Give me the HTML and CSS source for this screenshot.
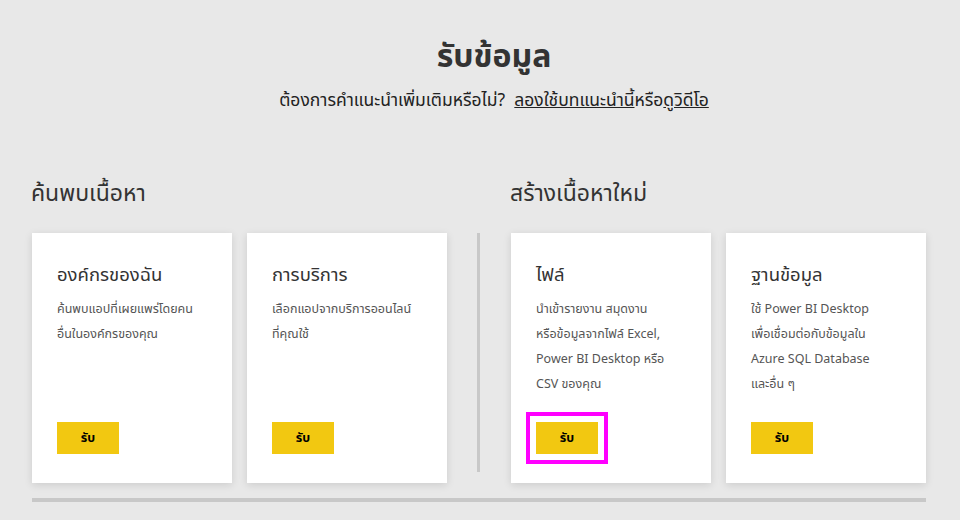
FILE: index.html
```html
<!DOCTYPE html>
<html lang="th">
<head>
<meta charset="utf-8">
<link rel="stylesheet" href="styles.css">
</head>
<body>
<div class="page">
  <header class="header">
    <h1 class="title">รับข้อมูล</h1>
    <p class="subtitle">ต้องการคำแนะนำเพิ่มเติมหรือไม่?&nbsp; <a href="#" class="link">ลองใช้บทแนะนำนี้</a>หรือ<a href="#" class="link">ดูวิดีโอ</a></p>
  </header>
  <div class="sections">
    <section class="section">
      <h2 class="section-title">ค้นพบเนื้อหา</h2>
      <div class="cards">
        <div class="card">
          <h3 class="card-title">องค์กรของฉัน</h3>
          <p class="card-desc">ค้นพบแอปที่เผยแพร่โดยคน<br>อื่นในองค์กรของคุณ</p>
          <div class="btn-wrap"><button class="btn">รับ</button></div>
        </div>
        <div class="card">
          <h3 class="card-title">การบริการ</h3>
          <p class="card-desc">เลือกแอปจากบริการออนไลน์<br>ที่คุณใช้</p>
          <div class="btn-wrap"><button class="btn">รับ</button></div>
        </div>
      </div>
    </section>
    <div class="divider"></div>
    <section class="section">
      <h2 class="section-title">สร้างเนื้อหาใหม่</h2>
      <div class="cards">
        <div class="card">
          <h3 class="card-title">ไฟล์</h3>
          <p class="card-desc">นำเข้ารายงาน สมุดงาน<br>หรือข้อมูลจากไฟล์ Excel,<br>Power BI Desktop หรือ<br>CSV ของคุณ</p>
          <div class="btn-wrap"><button class="btn btn-highlight">รับ</button></div>
        </div>
        <div class="card">
          <h3 class="card-title">ฐานข้อมูล</h3>
          <p class="card-desc">ใช้ Power BI Desktop<br>เพื่อเชื่อมต่อกับข้อมูลใน<br>Azure SQL Database<br>และอื่น ๆ</p>
          <div class="btn-wrap"><button class="btn">รับ</button></div>
        </div>
      </div>
    </section>
  </div>
  <div class="bottom-bar"></div>
</div>
</body>
</html>
```
FILE: styles.css
```css
* { box-sizing: border-box; }
html, body { margin: 0; padding: 0; }
body {
  background: #e8e8e8;
  font-family: "Segoe UI", "Noto Sans", "Noto Sans Thai", "DejaVu Sans", sans-serif;
  color: #333;
  width: 960px;
  height: 520px;
  overflow: hidden;
}
.page {
  padding: 0 34px 0 32px;
}
.header {
  text-align: center;
  padding-left: 30px;
  padding-top: 33px;
}
.title {
  margin: 0;
  font-size: 32px;
  font-weight: 700;
  line-height: 44px;
  color: #333;
}
.subtitle {
  margin: 10px 0 0;
  font-size: 17.5px;
  line-height: 24px;
  color: #222;
}
.link {
  color: #222;
  text-decoration: underline;
}
.sections {
  display: flex;
  margin-top: 66px;
}
.section-title {
  margin: 0 0 0 -1px;
  font-size: 23px;
  font-weight: 400;
  line-height: 30px;
  color: #333;
}
.cards {
  display: flex;
  gap: 15px;
  margin-top: 26px;
}
.divider {
  width: 3px;
  background: #c8c8c8;
  margin: 56px 31px 11px 30px;
}
.card {
  width: 200px;
  height: 250px;
  background: #fff;
  box-shadow: 0 2px 8px rgba(0, 0, 0, 0.12);
  padding: 28px 25px 29px;
  display: flex;
  flex-direction: column;
}
.card-title {
  margin: 0;
  font-size: 18.5px;
  font-weight: 400;
  line-height: 26px;
  color: #333;
}
.card-desc {
  margin: 9px 0 0;
  font-size: 12.5px;
  line-height: 25px;
  color: #555;
}
.btn-wrap {
  margin-top: auto;
}
.btn {
  width: 62px;
  height: 32px;
  border: none;
  background: #f2c811;
  color: #000;
  font-family: inherit;
  font-size: 12.5px;
  font-weight: 700;
  padding: 0;
  display: block;
}
.btn-highlight {
  outline: 4px solid #ff00ff;
  outline-offset: 6px;
}
.bottom-bar {
  height: 4px;
  background: #c8c8c8;
  margin-top: 15px;
}
```
